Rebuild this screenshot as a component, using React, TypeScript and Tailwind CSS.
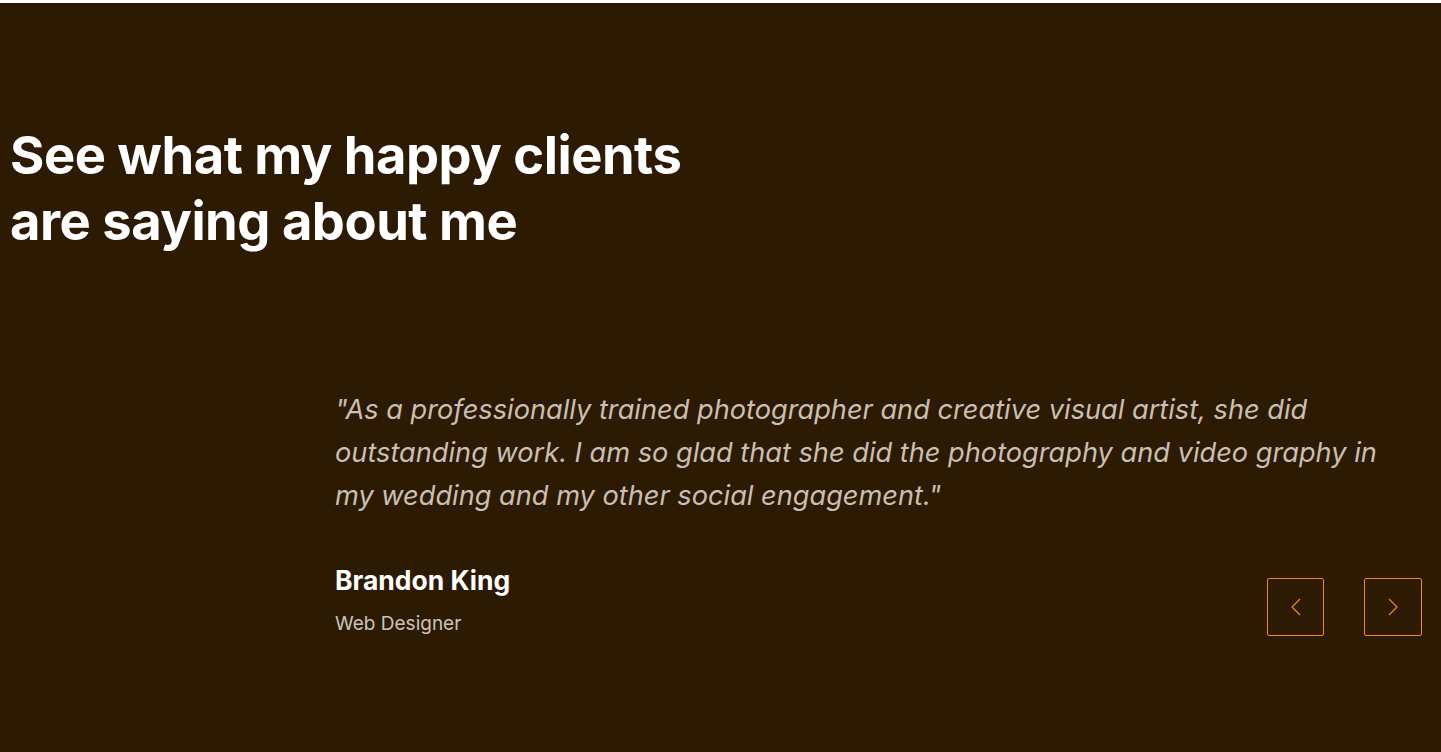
const testimonial = {
  quote: [
    '"As a professionally trained photographer and creative visual artist, she did',
    'outstanding work. I am so glad that she did the photography and video graphy in',
    'my wedding and my other social engagement."',
  ],
  name: 'Brandon King',
  role: 'Web Designer',
}

function Chevron({ dir }: { dir: 'left' | 'right' }) {
  return (
    <svg width="10" height="18" viewBox="0 0 10 18" fill="none" stroke="currentColor" strokeWidth="1.2">
      {dir === 'left' ? <polyline points="9,1 1,9 9,17" /> : <polyline points="1,1 9,9 1,17" />}
    </svg>
  )
}

export default function App() {
  return (
    <div className="min-h-[752px] bg-white pt-[3px] font-['Inter',sans-serif]">
      <section className="min-h-[749px] bg-[#2c1a02] pl-[10px] pr-[19px]">
        <h2 className="pt-[119px] text-[52.5px] font-bold leading-[66px] tracking-[-0.5px] text-white">
          See what my happy clients
          <br />
          are saying about me
        </h2>

        <div className="mt-[134px] flex">
          <div className="w-[325px] shrink-0" />
          <div className="flex-1">
            <p className="text-[27.2px] italic leading-[43px] text-[#c9bfb4]">
              {testimonial.quote.map((line, i) => (
                <span key={i} className="block whitespace-nowrap">
                  {line}
                </span>
              ))}
            </p>

            <div className="mt-[47px] flex items-start justify-between">
              <div>
                <h3 className="text-[26.5px] font-bold leading-[32px] text-white">{testimonial.name}</h3>
                <p className="mt-[17px] text-[19px] leading-[22px] text-[#cbc3ba]">{testimonial.role}</p>
              </div>
              <div className="mt-[14px] flex gap-[40px]">
                <button className="flex h-[58px] w-[57px] items-center justify-center rounded-[2px] border border-[#f08a16] text-[#f08a16]">
                  <Chevron dir="left" />
                </button>
                <button className="flex h-[58px] w-[58px] items-center justify-center rounded-[2px] border border-[#f08a16] text-[#f08a16]">
                  <Chevron dir="right" />
                </button>
              </div>
            </div>
          </div>
        </div>
      </section>
    </div>
  )
}
